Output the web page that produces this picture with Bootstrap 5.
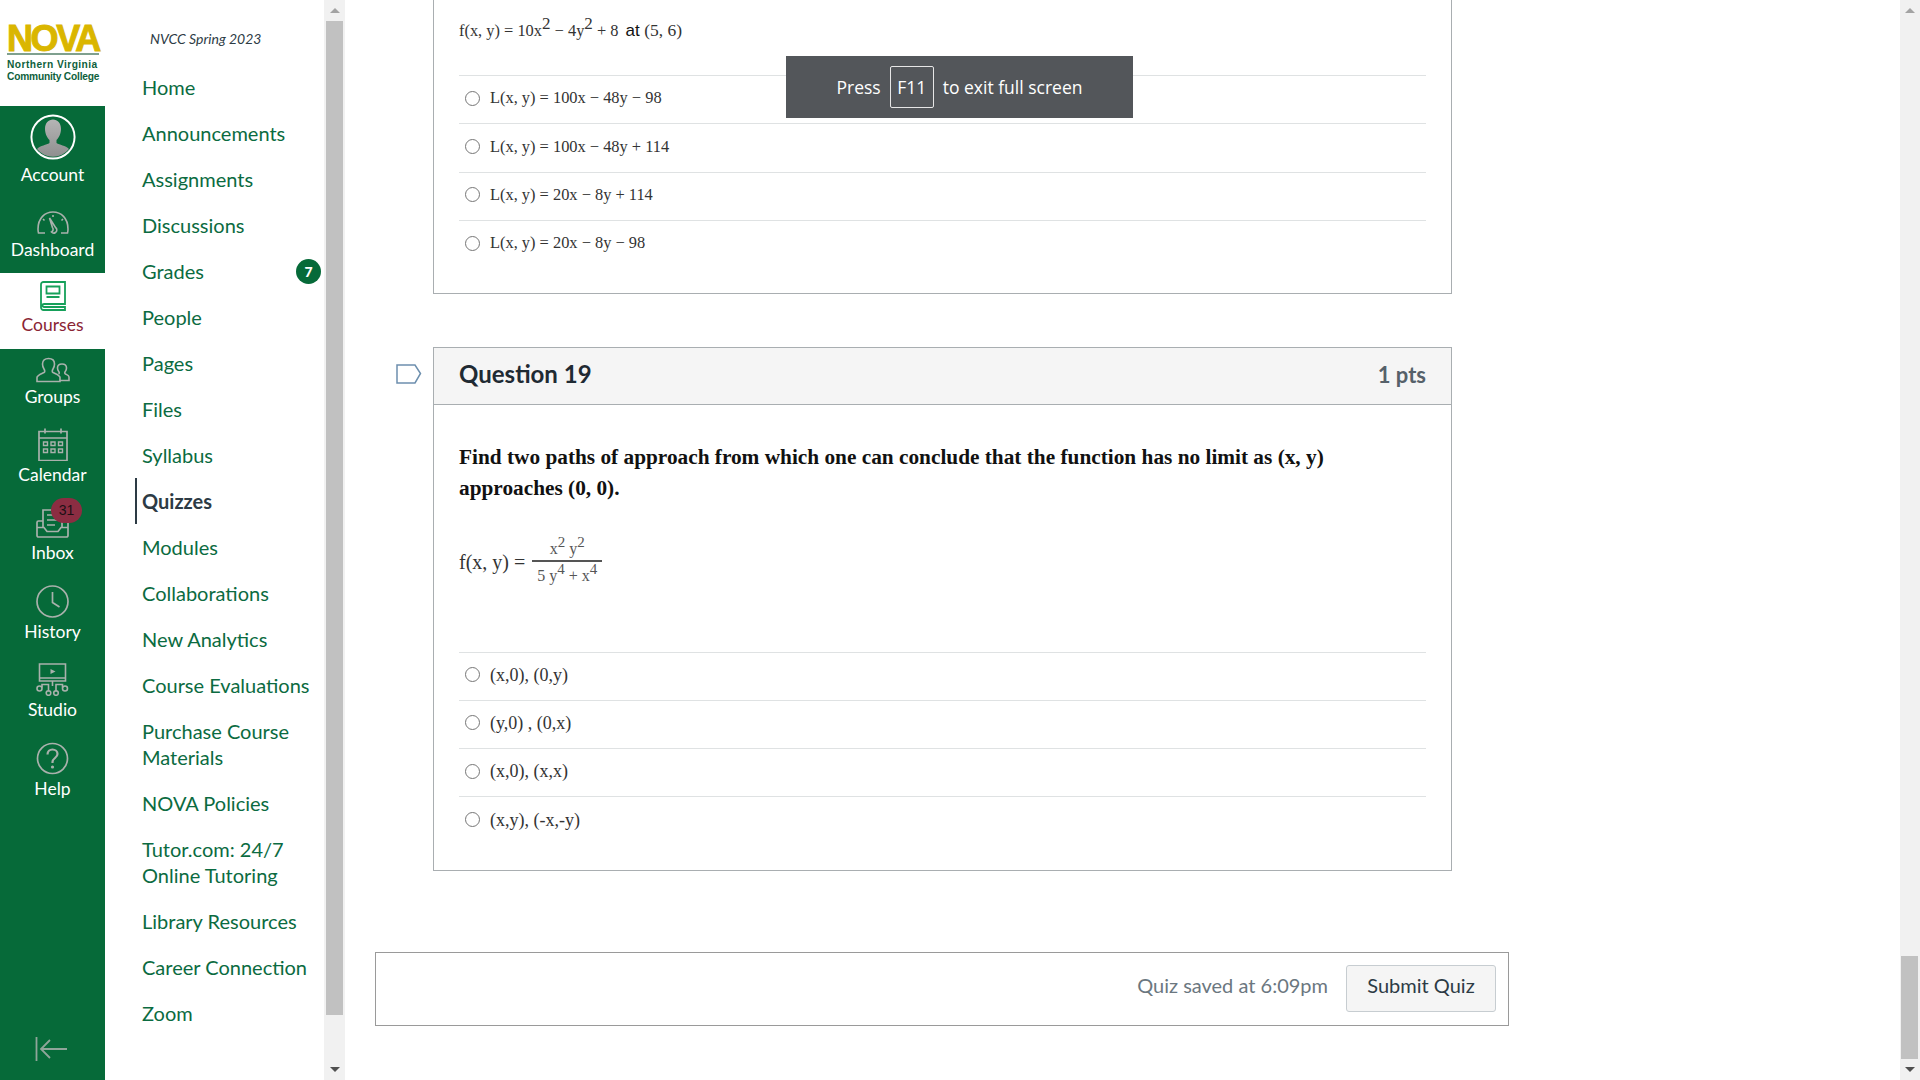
<!DOCTYPE html>
<html lang="en">
<head>
    <meta charset="UTF-8">
    <title>Quiz - NVCC Spring 2023</title>
    <link href="https://cdn.jsdelivr.net/npm/bootstrap@5.3.0/dist/css/bootstrap.min.css" rel="stylesheet">
    <style>
        html, body { height: 1080px; overflow: hidden; }
        body { font-family: Lato, sans-serif; color: #2d3b45; background: #fff; }

        /* left global bar */
        .global-nav { width: 105px; height: 1080px; flex: none; background: #066a39; position: relative; }
        .logo-box { height: 106px; background: #fff; padding: 23px 6px 0 7px; }
        .logo-word { font-family: "Liberation Sans", sans-serif; font-weight: 700; font-size: 36px; line-height: 32px; height: 29px; letter-spacing: -2.4px; color: #dab600; -webkit-text-stroke: 1px #dab600; }
        .logo-rule { height: 2px; margin: 1px 0 4px; background: #7fa08f; }
        .logo-sub { font-family: "Liberation Sans", sans-serif; font-weight: 700; font-size: 10.2px; line-height: 11.5px; letter-spacing: -.2px; color: #0d5f3c; white-space: nowrap; }
        .logo-sub.logo-wide { letter-spacing: .45px; }
        .g-item { height: 78.4px; padding-top: 8px; color: #fff; font-size: 17.5px; line-height: 20px; text-decoration: none; }
        .g-item svg { display: block; margin-bottom: 4px; flex: none; }
        .g-item:hover { color: #fff; }
        .g-account { height: 91px; padding-top: 8px; }
        .g-account svg { margin-bottom: 5px; }
        .g-short { height: 76px; }
        .g-groups { height: 71px; }
        .g-active { background: #fff; color: #8a2434; }
        .g-active:hover { color: #8a2434; }
        .inbox-count { position: absolute; left: 51px; top: 0; width: 31px; height: 25px; border-radius: 12.5px; background: #8b2d42; color: #1d1015; font-family: "Liberation Sans", sans-serif; font-size: 14px; line-height: 25px; text-align: center; }
        .collapse-arrow { position: absolute; left: 35px; top: 1037px; }

        /* course menu */
        .course-nav { width: 219px; height: 1080px; flex: none; padding: 29px 0 0 30px; }
        .term-name { font-size: 14px; font-style: italic; line-height: 20px; margin: 0 0 15px 15px; color: #2d3b45; }
        .c-link { display: block; padding: 10px 0 10px 5px; font-size: 20px; line-height: 26px; color: #0b6b41; text-decoration: none; border-left: 2px solid transparent; margin-right: -8px; }
        .c-link.c-on { font-weight: 700; color: #2d3b45; border-left-color: #2d3b45; }
        .grade-count { position: absolute; right: 11px; top: 50%; margin-top: -12.5px; width: 25px; height: 25px; border-radius: 50%; background: #066a39; color: #fff; font-size: 14px; font-weight: 900; line-height: 25px; text-align: center; }

        /* scrollbars */
        .side-scroll { width: 21px; flex: none; height: 1080px; background: #f1f1f1; position: relative; }
        .side-scroll.scroll-main { width: 20px; }
        .scroll-thumb { position: absolute; left: 2px; right: 2px; background: #c1c1c1; }
        .thumb-side { top: 21px; height: 994px; }
        .thumb-main { top: 956px; height: 103px; left: 1px; }
        .arrow-up, .arrow-down { position: absolute; left: 50%; margin-left: -5px; width: 0; height: 0; border-left: 5px solid transparent; border-right: 5px solid transparent; }
        .arrow-up { top: 8px; border-bottom: 5px solid #a3a3a3; }
        .arrow-down { bottom: 8px; border-top: 5px solid #505050; }

        /* quiz */
        .quiz-col { flex: 1 1 auto; min-width: 0; padding-left: 30px; position: relative; }
        .q-card { width: 1019px; margin-left: 58px; border: 1px solid #a9aeb1; border-radius: 0; position: relative; }
        .q-first { height: 294px; border-top: 0; }
        .q-second { height: 524px; margin-top: 53px; }
        .q-head { height: 57px; padding: 0 25px 4px; border-bottom: 1px solid #a9aeb1; border-radius: 0 !important; background: #f5f5f5; }
        .q-title { font-size: 24px; font-weight: 700; color: #1f2a33; }
        .q-pts { font-size: 22px; font-weight: 700; color: #56616a; }
        .q-flag { position: absolute; left: -38px; top: 16px; }
        .q-body { padding: 0 25px; font-family: "Liberation Serif", serif; }
        .q-formula-top { height: 75px; padding-top: 18px; font-size: 16.4px; line-height: 24px; color: #333; }
        .q-formula-top sup { font-size: 17px; top: -.4em; }
        .q-formula-top .at-part { font-size: 17.5px; margin-left: 3px; }
        .q-formula-top .at-word { font-family: "Liberation Sans", sans-serif; font-size: 17px; color: #111; }
        .q-text { padding-top: 37px; font-size: 21.3px; line-height: 31px; font-weight: 700; color: #111; }
        .q-formula { height: 78px; margin: 19px 0 50.5px; font-size: 20px; color: #333; }
        .frac-box { margin-left: 7px; width: 70px; font-size: 16px; color: #555; line-height: 21px; text-align: center; }
        .frac-box sup { font-size: 15px; top: -.45em; }
        .frac-line { height: 2px; background: #555; margin: 1px 0 3px; }
        .opt-row { height: 48.3px; padding-left: 6px; border-top: 1px solid #dfe2e3; color: #333; }
        .opt-row span { padding-bottom: 2px; }
        .opt-row .form-check-input { width: 15px; height: 15px; margin: -3px 10px 0 0; border: 1px solid #767676; float: none; flex: none; }
        .opt-small { font-size: 16.4px; }
        .opt-big { font-size: 18px; }
        .quiz-foot { width: 1134px; height: 74px; margin-top: 81px; padding: 0 12px 1px 0; border: 1px solid #9a9a9a; }
        .saved-note { font-size: 20px; color: #6b7780; margin-right: 18px; padding-bottom: 8px; }
        .submit-quiz { width: 150px; height: 47px; padding: 0 0 8px; font-size: 20px; color: #2d3b45; background: #f5f5f5; border: 1px solid #c7cdd1; border-radius: 3px; }

        /* browser fullscreen notice */
        .fs-notice { position: absolute; left: 441px; top: 56px; width: 347px; height: 62px; background: #53565a; color: #fff; font-family: "Open Sans", sans-serif; font-size: 17.5px; }
        .fs-key { width: 44px; height: 42px; margin: 0 9px; border: 1px solid #e6e6e6; border-radius: 2px; }
    </style>
</head>
<body>
<div class="d-flex">
    <div class="global-nav d-flex flex-column">
        <div class="logo-box">
            <div class="logo-word">NOVA</div>
            <div class="logo-rule"></div>
            <div class="logo-sub logo-wide">Northern Virginia</div>
            <div class="logo-sub">Community College</div>
        </div>
        <a href="#" class="g-item g-account d-flex flex-column align-items-center">
            <svg width="46" height="46" viewBox="0 0 46 46">
                <defs><linearGradient id="av" x1="0" y1="0" x2="0" y2="1"><stop offset="0" stop-color="#b5b5b5"/><stop offset="1" stop-color="#8f8f8f"/></linearGradient></defs>
                <circle cx="23" cy="23" r="21.8" fill="#fff" stroke="#fff" stroke-width="1.5"/>
                <circle cx="23" cy="23" r="20.6" fill="#066a39"/>
                <path d="M15 15c0-6 3.500-9.500 8-9.500s8 3.500 8 9.500c0 5-2.500 9-4.500 11v3c3 2 9 2.500 12.500 6a20.500 20.500 0 0 1-32 0c3.500-3.500 9.500-4 12.500-6v-3c-2-2-4.500-6-4.500-11z" fill="url(#av)"/>
            </svg>
            <span>Account</span>
        </a>
        <a href="#" class="g-item g-short d-flex flex-column align-items-center">
            <svg width="34" height="31" viewBox="0 2 34 31" fill="none" stroke="#a9b1ac" stroke-width="1.600">
                <path d="M9 30H2.500a15 15 0 0 1-.5-4C2 15 9 9 17 9s15 6 15 17a15 15 0 0 1-.5 4H25"/>
                <path d="M13.500 15l3 9.500a3 3 0 0 1-1 4.500 3 3 0 0 0 4 .5 3 3 0 0 0 0-5z"/>
                <path d="M17 12v2M7 16l1.500 1.500M27 16l-1.500 1.500"/>
            </svg>
            <span>Dashboard</span>
        </a>
        <a href="#" class="g-item g-short g-active d-flex flex-column align-items-center">
            <svg width="26" height="30" viewBox="0 0 26 30" fill="none" stroke="#16a05a" stroke-width="1.800">
                <path d="M25 1H3.500A2.500 2.500 0 0 0 1 3.500v23A2.500 2.500 0 0 0 3.500 29H25v-3H4a1.500 1.500 0 0 1 0-3h21z"/>
                <path d="M6.500 5.500h13v7h-13zM6.500 16h13"/>
            </svg>
            <span>Courses</span>
        </a>
        <a href="#" class="g-item g-groups d-flex flex-column align-items-center">
            <svg width="34" height="26" viewBox="0 0 34 26" fill="none" stroke="#a9b1ac" stroke-width="1.600">
                <path d="M1 24.500v-4c0-2 4-3.500 7-5 1-.5 1-2 0-3.500-1-1.500-1.500-3-1.500-5C6.500 3.500 9 1.500 12.500 1.500s6 2 6 5.500c0 2-.5 3.500-1.500 5-1 1.500-1 3 0 3.500 3 1.500 7 3 7 5v4z"/>
                <path d="M22.500 17c1-.5 1-1.500.2-2.500-.8-1-1.200-2-1.200-3.500 0-2.500 1.800-4 4.500-4s4.500 1.500 4.500 4c0 1.500-.4 2.500-1.200 3.500-.8 1-.8 2 .2 2.500 1.500.8 3.500 1.500 3.500 3v3.500h-9.500"/>
            </svg>
            <span>Groups</span>
        </a>
        <a href="#" class="g-item d-flex flex-column align-items-center">
            <svg width="30" height="33" viewBox="0 0 30 33" fill="none" stroke="#a9b1ac" stroke-width="1.700">
                <path d="M1 3.500h28v29H1zM1 10h28M7 .5v5M23 .5v5"/>
                <path d="M5.500 14h4v3.500h-4zM13 14h4v3.500h-4zM20.500 14h4v3.500h-4zM5.500 21h4v3.500h-4zM13 21h4v3.500h-4zM20.500 21h4v3.500h-4z" stroke-width="1.400"/>
            </svg>
            <span>Calendar</span>
        </a>
        <a href="#" class="g-item d-flex flex-column align-items-center position-relative">
            <svg width="33" height="33" viewBox="0 0 33 33" fill="none" stroke="#a9b1ac" stroke-width="1.700">
                <path d="M7 21V4h19v17M11 9h11M11 14h11M11 19h8"/>
                <path d="M7 15H2.500A1.500 1.500 0 0 0 1 16.500v13A1.500 1.500 0 0 0 2.500 31h28a1.500 1.500 0 0 0 1.500-1.500v-13a1.500 1.500 0 0 0-1.500-1.500H26"/>
                <path d="M1 21.500h7l3 4h11l3-4h7"/>
            </svg>
            <span>Inbox</span>
            <span class="inbox-count">31</span>
        </a>
        <a href="#" class="g-item d-flex flex-column align-items-center">
            <svg width="33" height="33" viewBox="0 0 33 33" fill="none" stroke="#a9b1ac" stroke-width="1.700">
                <circle cx="16.500" cy="16.500" r="15.500"/>
                <path d="M16.500 7v10.500l7 4.500"/>
            </svg>
            <span>History</span>
        </a>
        <a href="#" class="g-item d-flex flex-column align-items-center">
            <svg width="33" height="33" viewBox="0 0 33 33" fill="none" stroke="#a9b1ac" stroke-width="1.600">
                <path d="M3.500 1h26v17h-26zM3.500 15h26"/>
                <path d="M14.500 6l5 2.500-5 2.500z" fill="#a9b1ac" stroke="none"/>
                <path d="M6 24.500v-3h6.500v7M26.500 24.500v-3H20v7M16.500 18v5"/>
                <circle cx="3.500" cy="25.500" r="2.500"/><circle cx="12.500" cy="30" r="2.300"/><circle cx="20" cy="30" r="2.300"/><circle cx="29" cy="25.500" r="2.500"/>
            </svg>
            <span>Studio</span>
        </a>
        <a href="#" class="g-item d-flex flex-column align-items-center">
            <svg width="33" height="33" viewBox="0 0 33 33" fill="none" stroke="#a9b1ac" stroke-width="1.700">
                <circle cx="16.500" cy="16.500" r="15"/>
                <path d="M11.500 12.500c0-3 2.200-5 5-5s5 2 5 4.500c0 4-5 4-5 8v1" stroke-width="2.200"/>
                <circle cx="16.500" cy="25" r="1.600" fill="#a9b1ac" stroke="none"/>
            </svg>
            <span>Help</span>
        </a>
        <svg class="collapse-arrow" width="33" height="24" viewBox="0 0 33 24" fill="none" stroke="#8fa59a" stroke-width="1.800">
            <path d="M1.500 0v24M32 12H6M15 3l-9 9 9 9"/>
        </svg>
    </div>

    <div class="course-nav">
        <div class="term-name">NVCC Spring 2023</div>
        <nav class="nav flex-column flex-nowrap">
            <a class="c-link" href="#">Home</a>
            <a class="c-link" href="#">Announcements</a>
            <a class="c-link" href="#">Assignments</a>
            <a class="c-link" href="#">Discussions</a>
            <a class="c-link position-relative" href="#">Grades<span class="grade-count">7</span></a>
            <a class="c-link" href="#">People</a>
            <a class="c-link" href="#">Pages</a>
            <a class="c-link" href="#">Files</a>
            <a class="c-link" href="#">Syllabus</a>
            <a class="c-link c-on" href="#">Quizzes</a>
            <a class="c-link" href="#">Modules</a>
            <a class="c-link" href="#">Collaborations</a>
            <a class="c-link" href="#">New Analytics</a>
            <a class="c-link" href="#">Course Evaluations</a>
            <a class="c-link" href="#">Purchase Course Materials</a>
            <a class="c-link" href="#">NOVA Policies</a>
            <a class="c-link" href="#">Tutor.com: 24/7 Online Tutoring</a>
            <a class="c-link" href="#">Library Resources</a>
            <a class="c-link" href="#">Career Connection</a>
            <a class="c-link" href="#">Zoom</a>
        </nav>
    </div>
    <div class="side-scroll"><div class="arrow-up"></div><div class="scroll-thumb thumb-side"></div><div class="arrow-down"></div></div>

    <main class="quiz-col">
        <div class="card q-card q-first">
            <div class="q-body">
                <div class="q-formula-top">f(x, y) = 10x<sup>2</sup> − 4y<sup>2</sup> + 8 <span class="at-part"><span class="at-word">at</span> (5, 6)</span></div>
                <div class="opt-row opt-small d-flex align-items-center"><input class="form-check-input" type="radio" name="q18"><span>L(x, y) = 100x − 48y − 98</span></div>
                <div class="opt-row opt-small d-flex align-items-center"><input class="form-check-input" type="radio" name="q18"><span>L(x, y) = 100x − 48y + 114</span></div>
                <div class="opt-row opt-small d-flex align-items-center"><input class="form-check-input" type="radio" name="q18"><span>L(x, y) = 20x − 8y + 114</span></div>
                <div class="opt-row opt-small d-flex align-items-center"><input class="form-check-input" type="radio" name="q18"><span>L(x, y) = 20x − 8y − 98</span></div>
            </div>
        </div>

        <div class="card q-card q-second">
            <svg class="q-flag" width="26" height="20" viewBox="0 0 26 20" fill="none" stroke="#6d8fae" stroke-width="1.500">
                <path d="M1 1h18l5.500 8.500L19 19H1z"/>
            </svg>
            <div class="card-header q-head d-flex justify-content-between align-items-center">
                <span class="q-title">Question 19</span>
                <span class="q-pts">1 pts</span>
            </div>
            <div class="q-body">
                <div class="q-text">Find two paths of approach from which one can conclude that the function has no limit as (x, y) approaches (0, 0).</div>
                <div class="q-formula d-flex align-items-center">
                    <span>f(x, y) =</span>
                    <div class="frac-box">
                        <div>x<sup>2</sup> y<sup>2</sup></div>
                        <div class="frac-line"></div>
                        <div>5 y<sup>4</sup> + x<sup>4</sup></div>
                    </div>
                </div>
                <div class="opt-row opt-big d-flex align-items-center"><input class="form-check-input" type="radio" name="q19"><span>(x,0), (0,y)</span></div>
                <div class="opt-row opt-big d-flex align-items-center"><input class="form-check-input" type="radio" name="q19"><span>(y,0) , (0,x)</span></div>
                <div class="opt-row opt-big d-flex align-items-center"><input class="form-check-input" type="radio" name="q19"><span>(x,0), (x,x)</span></div>
                <div class="opt-row opt-big d-flex align-items-center"><input class="form-check-input" type="radio" name="q19"><span>(x,y), (-x,-y)</span></div>
            </div>
        </div>

        <div class="quiz-foot d-flex justify-content-end align-items-center">
            <span class="saved-note">Quiz saved at 6:09pm</span>
            <button class="btn submit-quiz" type="button">Submit Quiz</button>
        </div>

        <div class="fs-notice d-flex justify-content-center align-items-center">
            <span>Press</span>
            <span class="fs-key d-flex justify-content-center align-items-center">F11</span>
            <span>to exit full screen</span>
        </div>
    </main>
    <div class="side-scroll scroll-main"><div class="arrow-up"></div><div class="scroll-thumb thumb-main"></div><div class="arrow-down"></div></div>
</div>
<script src="https://cdn.jsdelivr.net/npm/bootstrap@5.3.0/dist/js/bootstrap.bundle.min.js"></script>
</body>
</html>
